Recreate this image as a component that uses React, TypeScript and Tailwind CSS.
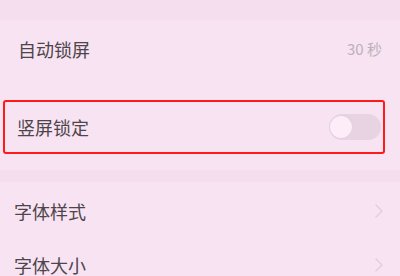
import React from "react";

const font = { fontFamily: '"Noto Sans CJK SC", "Noto Sans", sans-serif' };

const Chevron = () => (
  <svg width="8" height="14" viewBox="0 0 8 14" fill="none">
    <path d="M1 1l6 6-6 6" stroke="#e0cfdb" strokeWidth="1.4" strokeLinecap="round" strokeLinejoin="round" />
  </svg>
);

export default function App() {
  return (
    <div className="w-[400px] h-[276px] overflow-hidden bg-[#f8e3f2] text-[#4d454b]" style={font}>
      {/* section gap */}
      <div className="h-[20px] bg-[#f5deee]" />

      {/* 自动锁屏 */}
      <div className="h-[58px] flex items-center justify-between pl-[18px] pr-[18px]">
        <span className="text-[18px]">自动锁屏</span>
        <span className="text-[15px] text-[#bcb1b9]">30 秒</span>
      </div>

      {/* 竖屏锁定 highlighted */}
      <div className="h-[92px] pt-[22px] pl-[3px] pr-[15px]">
        <div className="h-[54px] border-2 border-[#ff1a1a] rounded-[3px] flex items-center justify-between pl-[12px] pr-[2px]">
          <span className="text-[18px]">竖屏锁定</span>
          <div className="w-[52px] h-[26px] rounded-full bg-[#e8d3e2] flex items-center pl-[1px]">
            <div className="w-[22px] h-[22px] rounded-full bg-[#fcedf8] shadow-[0_0_2px_rgba(0,0,0,0.06)]" />
          </div>
        </div>
      </div>

      {/* section gap */}
      <div className="h-[12px] bg-[#f5deee]" />

      {/* 字体样式 */}
      <div className="h-[58px] flex items-center justify-between pl-[14px] pr-[17px]">
        <span className="text-[18px]">字体样式</span>
        <Chevron />
      </div>

      {/* 字体大小 */}
      <div className="h-[50px] flex items-center justify-between pl-[14px] pr-[17px]">
        <span className="text-[18px]">字体大小</span>
        <Chevron />
      </div>
    </div>
  );
}
